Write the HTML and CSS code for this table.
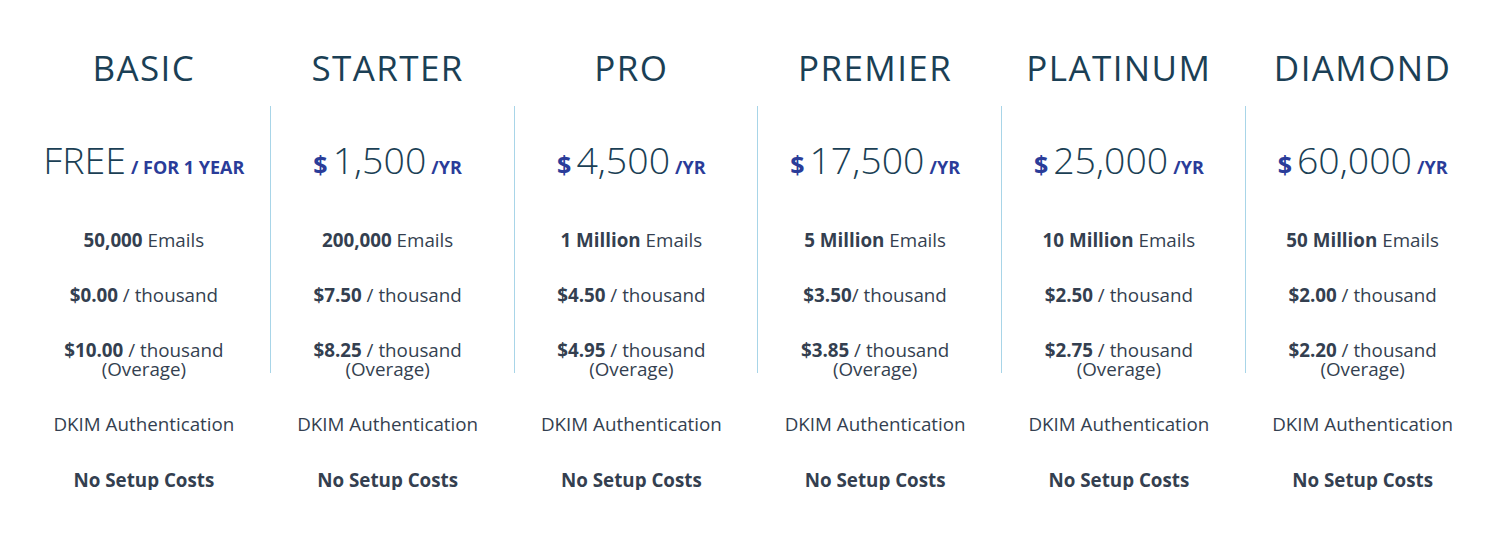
FILE: index.html
```html
<!DOCTYPE html>
<html lang="en">
<head>
<meta charset="utf-8">
<title>Pricing</title>
<link rel="stylesheet" href="styles.css">
</head>
<body>
<div class="plans">
  <div class="plan">
    <h2 class="plan-title">BASIC</h2>
    <div class="plan-body first">
      <div class="price"><span class="amount">FREE</span><span class="per">/ FOR 1 YEAR</span></div>
      <div class="feat"><b>50,000</b> Emails</div>
      <div class="feat"><b>$0.00</b> / thousand</div>
      <div class="feat"><b>$10.00</b> / thousand<br>(Overage)</div>
    </div>
    <div class="feat dkim">DKIM Authentication</div>
    <div class="feat setup"><b>No Setup Costs</b></div>
  </div>
  <div class="plan">
    <h2 class="plan-title">STARTER</h2>
    <div class="plan-body">
      <div class="price"><span class="cur">$</span><span class="amount">1,500</span><span class="per">/YR</span></div>
      <div class="feat"><b>200,000</b> Emails</div>
      <div class="feat"><b>$7.50</b> / thousand</div>
      <div class="feat"><b>$8.25</b> / thousand<br>(Overage)</div>
    </div>
    <div class="feat dkim">DKIM Authentication</div>
    <div class="feat setup"><b>No Setup Costs</b></div>
  </div>
  <div class="plan">
    <h2 class="plan-title">PRO</h2>
    <div class="plan-body">
      <div class="price"><span class="cur">$</span><span class="amount">4,500</span><span class="per">/YR</span></div>
      <div class="feat"><b>1 Million</b> Emails</div>
      <div class="feat"><b>$4.50</b> / thousand</div>
      <div class="feat"><b>$4.95</b> / thousand<br>(Overage)</div>
    </div>
    <div class="feat dkim">DKIM Authentication</div>
    <div class="feat setup"><b>No Setup Costs</b></div>
  </div>
  <div class="plan">
    <h2 class="plan-title">PREMIER</h2>
    <div class="plan-body">
      <div class="price"><span class="cur">$</span><span class="amount">17,500</span><span class="per">/YR</span></div>
      <div class="feat"><b>5 Million</b> Emails</div>
      <div class="feat"><b>$3.50</b>/ thousand</div>
      <div class="feat"><b>$3.85</b> / thousand<br>(Overage)</div>
    </div>
    <div class="feat dkim">DKIM Authentication</div>
    <div class="feat setup"><b>No Setup Costs</b></div>
  </div>
  <div class="plan">
    <h2 class="plan-title">PLATINUM</h2>
    <div class="plan-body">
      <div class="price"><span class="cur">$</span><span class="amount">25,000</span><span class="per">/YR</span></div>
      <div class="feat"><b>10 Million</b> Emails</div>
      <div class="feat"><b>$2.50</b> / thousand</div>
      <div class="feat"><b>$2.75</b> / thousand<br>(Overage)</div>
    </div>
    <div class="feat dkim">DKIM Authentication</div>
    <div class="feat setup"><b>No Setup Costs</b></div>
  </div>
  <div class="plan">
    <h2 class="plan-title">DIAMOND</h2>
    <div class="plan-body">
      <div class="price"><span class="cur">$</span><span class="amount">60,000</span><span class="per">/YR</span></div>
      <div class="feat"><b>50 Million</b> Emails</div>
      <div class="feat"><b>$2.00</b> / thousand</div>
      <div class="feat"><b>$2.20</b> / thousand<br>(Overage)</div>
    </div>
    <div class="feat dkim">DKIM Authentication</div>
    <div class="feat setup"><b>No Setup Costs</b></div>
  </div>
</div>
</body>
</html>
```

FILE: styles.css
```css
html, body {
  margin: 0;
  padding: 0;
  background: #ffffff;
}
body {
  font-family: "Open Sans", "Liberation Sans", sans-serif;
  color: #343f50;
}
.plans {
  display: grid;
  grid-template-columns: repeat(6, 243.75px);
  padding: 48px 0 0 27px;
}
.plan {
  display: flex;
  flex-direction: column;
  align-items: stretch;
  text-align: center;
}
.plan-title {
  margin: 0;
  font-weight: 400;
  font-size: 35px;
  line-height: 40px;
  letter-spacing: 1.4px;
  color: #1b3f55;
  padding-right: 10px;
}
.plan-body {
  margin-top: 18px;
  height: 267px;
  box-sizing: border-box;
  padding-top: 29px;
  padding-right: 10px;
  border-left: 1px solid #a8d5e8;
  margin-left: -1px;
}
.plan-body.first {
  border-left-color: transparent;
}
.price {
  line-height: 50px;
  height: 50px;
  white-space: nowrap;
  margin-bottom: 45.5px;
}
.amount {
  font-size: 37.5px;
  font-weight: 300;
  color: #1b3f55;
}
.cur {
  font-size: 25px;
  font-weight: 700;
  color: #2a3c99;
  margin-right: 5px;
}
.per {
  font-size: 18px;
  font-weight: 700;
  color: #2a3c99;
  margin-left: 5px;
}
.feat {
  font-size: 18.8px;
  line-height: 19px;
  margin-bottom: 36px;
  padding-right: 10px;
}
.plan-body .feat {
  padding-right: 0;
}
.feat b {
  font-weight: 700;
}
.dkim {
  margin-top: 41.5px;
  margin-bottom: 37px;
}
.setup {
  margin-bottom: 0;
}
```
